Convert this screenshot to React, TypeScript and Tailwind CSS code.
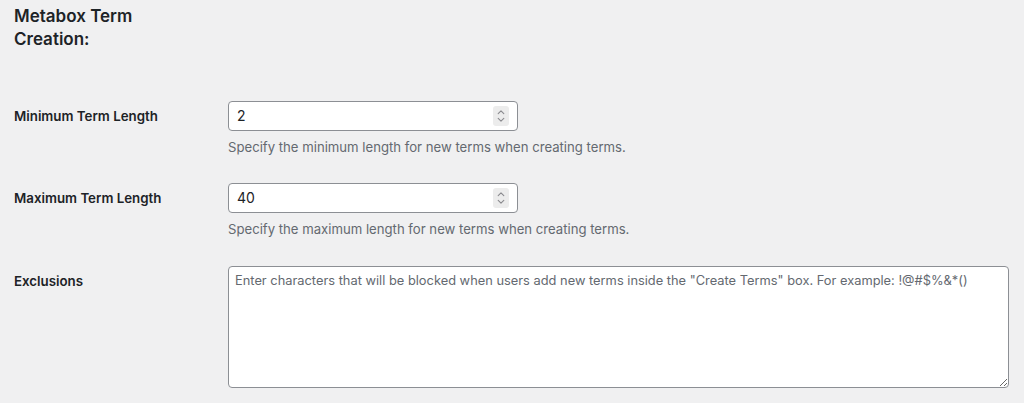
import React from "react";

type Row = {
  label: string;
  value: string;
  description: string;
};

const rows: Row[] = [
  {
    label: "Minimum Term Length",
    value: "2",
    description: "Specify the minimum length for new terms when creating terms.",
  },
  {
    label: "Maximum Term Length",
    value: "40",
    description: "Specify the maximum length for new terms when creating terms.",
  },
];

function Spinner() {
  return (
    <span className="flex h-[20px] w-[16px] flex-col items-center justify-center rounded-[3px] bg-[#ececec]">
      <svg width="8" height="14" viewBox="0 0 8 14" fill="none">
        <path d="M1.2 4.6 4 1.8l2.8 2.8" stroke="#8a8a8e" strokeWidth="1.1" strokeLinecap="round" strokeLinejoin="round" />
        <path d="M1.2 9.4 4 12.2l2.8-2.8" stroke="#8a8a8e" strokeWidth="1.1" strokeLinecap="round" strokeLinejoin="round" />
      </svg>
    </span>
  );
}

export default function App() {
  return (
    <div
      className="min-h-[403px] w-full bg-[#f0f0f1] px-[14px] text-[#1d2327]"
      style={{ fontFamily: 'Inter, "Liberation Sans", Arial, sans-serif' }}
    >
      <h2 className="w-[150px] pt-[5px] text-[17px] font-semibold leading-[23px]">
        Metabox Term Creation:
      </h2>

      <div className="mt-[50px] flex flex-col gap-[26px]">
        {rows.map((row) => (
          <div key={row.label} className="flex">
            <label className="w-[214px] shrink-0 pt-[6px] text-[13.3px] font-semibold leading-[18px]">
              {row.label}
            </label>
            <div className="flex flex-col">
              <div className="flex h-[30px] w-[290px] items-center rounded-[4px] border border-[#8c8f94] bg-white pl-[8px] pr-[8px]">
                <input
                  readOnly
                  value={row.value}
                  className="min-w-0 flex-1 bg-transparent text-[14px] leading-[20px] text-[#1d2327] outline-none"
                />
                <Spinner />
              </div>
              <p className="mt-[6px] text-[13.15px] leading-[20px] text-[#646970]">
                {row.description}
              </p>
            </div>
          </div>
        ))}

        <div className="mt-[1px] flex">
          <label className="w-[214px] shrink-0 pt-[6px] text-[13.3px] font-semibold leading-[18px]">
            Exclusions
          </label>
          <textarea
            placeholder={'Enter characters that will be blocked when users add new terms inside the "Create Terms" box. For example: !@#$%&*()'}
            className="h-[122px] w-[781px] rounded-[4px] border border-[#8c8f94] bg-white px-[6px] py-[4px] text-[12.85px] leading-[20px] text-[#1d2327] outline-none placeholder:text-[#646970]"
          />
        </div>
      </div>
    </div>
  );
}
